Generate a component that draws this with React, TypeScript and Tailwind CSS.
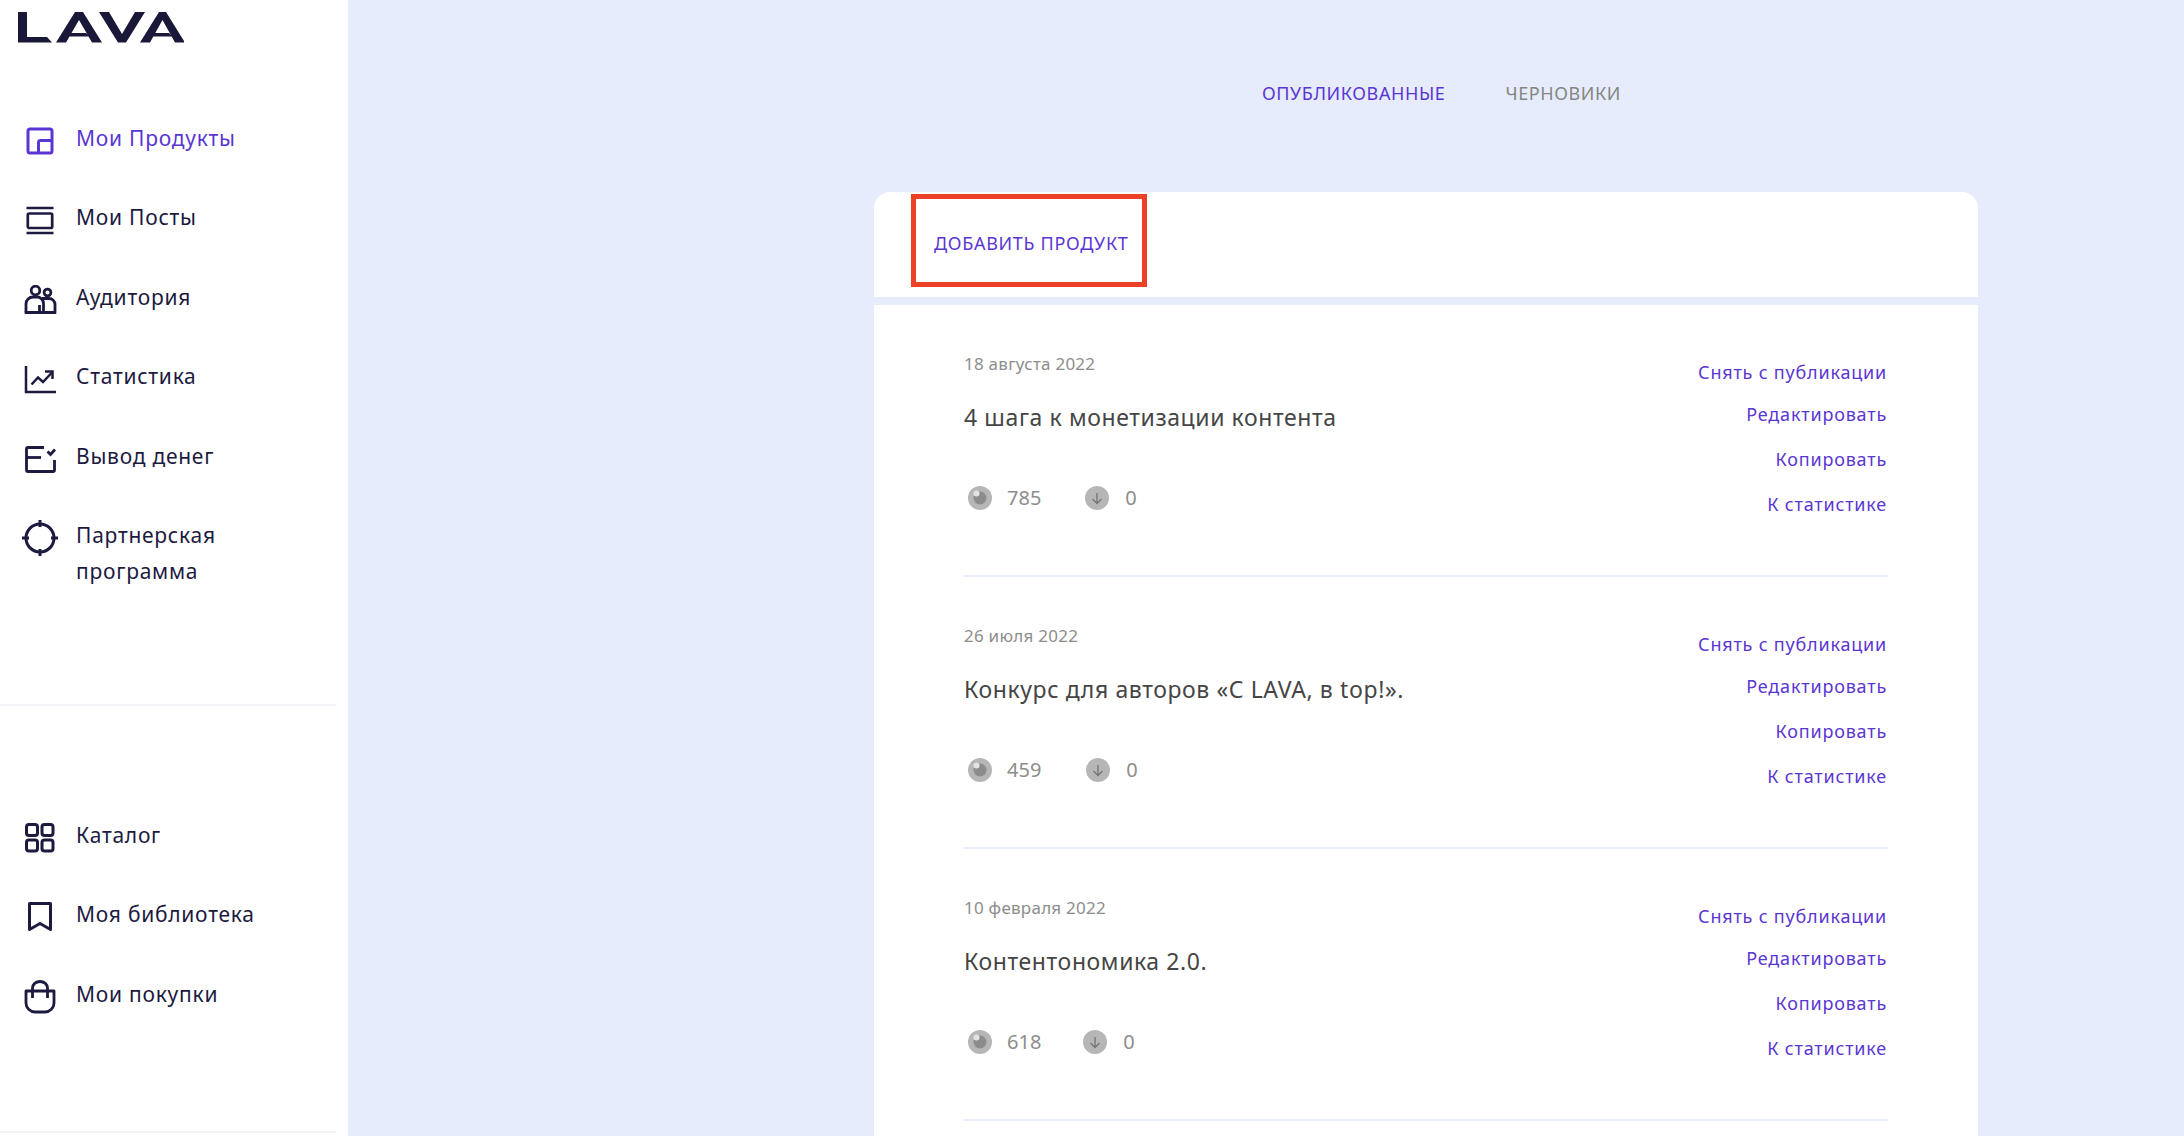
import React from "react";

function ProductIcon() {
  return (
    <svg width="30" height="30" viewBox="0 0 30 30" fill="none" stroke="currentColor" strokeWidth="3">
      <rect x="3" y="3" width="24" height="24" rx="2" />
      <path d="M13.500 27V16.500a2 2 0 0 1 2-2H27" />
    </svg>
  );
}
function PostsIcon() {
  return (
    <svg width="30" height="30" viewBox="0 0 30 30" fill="none" stroke="currentColor" strokeWidth="2.700">
      <path d="M1.500 3h27M1.500 28h27" />
      <rect x="2.800" y="8.500" width="24.400" height="14.500" rx="1.500" />
    </svg>
  );
}
function AudienceIcon() {
  return (
    <svg width="34" height="30" viewBox="0 0 34 30" fill="none" stroke="currentColor" strokeWidth="2.800">
      <circle cx="12.500" cy="5.500" r="4.300" />
      <circle cx="24.500" cy="7.500" r="3.400" />
      <path d="M3 27.500V19a7 7 0 0 1 7-7h4a6.500 6.500 0 0 1 6.500 6.500v9" />
      <path d="M16.500 27.500V20M19 13.500h7a6 6 0 0 1 6 6v8M1.700 27.500h31.600" />
    </svg>
  );
}
function StatsIcon() {
  return (
    <svg width="32" height="30" viewBox="0 0 32 30" fill="none" stroke="currentColor" strokeWidth="2.500">
      <path d="M2 2v26h30" />
      <path d="M7.500 20.500l6.500-7 5 4.500 8.500-9" />
      <path d="M21 7.500h7.500V15" />
    </svg>
  );
}
function WithdrawIcon() {
  return (
    <svg width="32" height="30" viewBox="0 0 32 30" fill="none" stroke="currentColor" strokeWidth="2.800">
      <path d="M20 3.500H4a1.500 1.500 0 0 0-1.500 1.500v21A1.500 1.500 0 0 0 4 27.500h25a1.500 1.500 0 0 0 1.500-1.500V16" />
      <path d="M3 13.500h14" />
      <path d="M23.500 7.500l3 3 4.500-5" />
    </svg>
  );
}
function PartnerIcon() {
  return (
    <svg width="38" height="38" viewBox="0 0 38 38" fill="none" stroke="currentColor" strokeWidth="3">
      <circle cx="19" cy="19" r="14" />
      <path d="M19 1v7M19 30v7M1 19h7M30 19h7" />
    </svg>
  );
}
function CatalogIcon() {
  return (
    <svg width="30" height="30" viewBox="0 0 30 30" fill="none" stroke="currentColor" strokeWidth="3">
      <rect x="1.500" y="1.500" width="11" height="11" rx="2.500" />
      <rect x="17" y="1.500" width="11" height="11" rx="2.500" />
      <rect x="1.500" y="17" width="11" height="11" rx="2.500" />
      <rect x="17" y="17" width="11" height="11" rx="2.500" />
    </svg>
  );
}
function BookmarkIcon() {
  return (
    <svg width="26" height="32" viewBox="0 0 26 32" fill="none" stroke="currentColor" strokeWidth="3">
      <path d="M2.500 2.500h21v26l-10.500-6-10.500 6z" strokeLinejoin="round" />
    </svg>
  );
}
function BagIcon() {
  return (
    <svg width="32" height="34" viewBox="0 0 32 34" fill="none" stroke="currentColor" strokeWidth="2.800">
      <path d="M2 11h28v12a9 9 0 0 1-9 9H11a9 9 0 0 1-9-9z" strokeLinejoin="round" />
      <path d="M8.500 18V8a7.500 6.500 0 0 1 15 0v10" />
    </svg>
  );
}

function Logo() {
  return (
    <svg width="166" height="31" viewBox="0 0 166 31" className="block" fill="#1a1838">
      <path d="M0 0h9v25h20l5 5.500H0z" />
      <path d="M38 30.500 57 0h8l19 30.500h-10L61 8 48 30.500zM52 21h16l3 3.500H50z" />
      <path d="M81 0h10l13 22L117 0h10l-19 30.500h-8z" />
      <path d="M122 30.500 141 0h7l19 30.500h-10L144.500 8 132 30.500zM135 21h16l3 3.500h-21z" />
    </svg>
  );
}

type NavItem = { label: React.ReactNode; icon: React.ReactNode; active?: boolean };

function SideLink({ label, icon, active }: NavItem) {
  return (
    <a className={`flex items-start ${active ? "text-[#5a36d3]" : "text-[#1c1a3f]"}`}>
      <span className="flex h-9 w-[39px] shrink-0 translate-y-[3px] items-center justify-center">{icon}</span>
      <span className="ml-[17px] text-[21px] leading-[36px] tracking-[0.75px]">{label}</span>
    </a>
  );
}

function EyeBadge() {
  return (
    <svg width="24" height="24" viewBox="0 0 24 24">
      <circle cx="12" cy="12" r="12" fill="#b6b6b6" />
      <circle cx="12" cy="12" r="6.500" fill="#8c8c8c" />
      <circle cx="8.500" cy="7.500" r="3" fill="#e4e4e4" />
    </svg>
  );
}

function DownBadge() {
  return (
    <svg width="24" height="24" viewBox="0 0 24 24" fill="none">
      <circle cx="12" cy="12" r="12" fill="#b6b6b6" />
      <path d="M12 7v10M7.500 13l4.500 4.500 4.500-4.500" stroke="#757575" strokeWidth="1.300" />
    </svg>
  );
}

type Post = { date: string; title: string; views: string; gap: string };

function PostRow({ date, title, views, gap }: Post) {
  return (
    <div className="flex h-[272px] justify-between border-b-2 border-[#e6ecfc] pt-[44px]">
      <div>
        <div className="text-[17px] leading-[30px] tracking-[0.25px] text-[#8d8d8d]">{date}</div>
        <div className="mt-[23px] text-[23px] leading-[30px] tracking-[0.6px] text-[#454545]">{title}</div>
        <div className="mt-[51px] flex items-center text-[20px] leading-[30px] text-[#8d8d8d]">
          <span className="ml-[4px]"><EyeBadge /></span>
          <span className="ml-[15px]">{views}</span>
          <span className={gap}><DownBadge /></span>
          <span className="ml-[16px]">0</span>
        </div>
      </div>
      <div className="flex flex-col items-end pt-[8px] pr-[1px] text-[18px] leading-[30px] tracking-[0.8px] text-[#5a36d3]">
        <a>Снять с публикации</a>
        <a className="mt-[12px]">Редактировать</a>
        <a className="mt-[15px]">Копировать</a>
        <a className="mt-[15px]">К статистике</a>
      </div>
    </div>
  );
}

const posts: Post[] = [
  { date: "18 августа 2022", title: "4 шага к монетизации контента", views: "785", gap: "ml-[44px]" },
  { date: "26 июля 2022", title: "Конкурс для авторов «С LAVA, в top!».", views: "459", gap: "ml-[45px]" },
  { date: "10 февраля 2022", title: "Контентономика 2.0.", views: "618", gap: "ml-[42px]" },
];

export default function App() {
  return (
    <div className="flex h-[1136px] overflow-hidden bg-[#e6ecfc] [font-family:'Noto_Sans',sans-serif]">
      <aside className="flex h-full w-[348px] shrink-0 flex-col bg-white">
        <div className="h-[120px] shrink-0 pl-[18px] pt-[12px]">
          <Logo />
        </div>
        <nav className="flex flex-col gap-[43.4px] pl-[20px]">
          <SideLink active label="Мои Продукты" icon={<ProductIcon />} />
          <SideLink label="Мои Посты" icon={<PostsIcon />} />
          <SideLink label="Аудитория" icon={<AudienceIcon />} />
          <SideLink label="Статистика" icon={<StatsIcon />} />
          <SideLink label="Вывод денег" icon={<WithdrawIcon />} />
          <SideLink label={<>Партнерская<br />программа</>} icon={<PartnerIcon />} />
        </nav>
        <div className="mt-[115px] mr-[12px] border-t-2 border-[#f2f3f7]" />
        <nav className="mt-[111px] flex flex-col gap-[43.500px] pl-[20px]">
          <SideLink label="Каталог" icon={<CatalogIcon />} />
          <SideLink label="Моя библиотека" icon={<BookmarkIcon />} />
          <SideLink label="Мои покупки" icon={<BagIcon />} />
        </nav>
        <div className="mt-[119px] mr-[12px] border-t-2 border-[#f2f3f7]" />
      </aside>
      <main className="flex-1">
        <div className="ml-[526px] w-[1104px]">
          <div className="flex h-[192px] items-start gap-[60px] pl-[388px] pt-[78px] text-[18px] leading-[30px] tracking-[0.6px]">
            <span className="text-[#5a36d3]">ОПУБЛИКОВАННЫЕ</span>
            <span className="text-[#858585]">ЧЕРНОВИКИ</span>
          </div>
          <div className="relative flex h-[105px] items-center rounded-t-[16px] bg-white pl-[60px] text-[18px] tracking-[0.7px] text-[#5a36d3]">
            <span className="mt-[-2px]">ДОБАВИТЬ ПРОДУКТ</span>
            <div className="absolute left-[37px] top-[2px] h-[93px] w-[236px] border-[5px] border-[#ec4126]" />
          </div>
          <div className="mt-[8px] h-[831px] bg-white px-[90px]">
            {posts.map((p) => (
              <PostRow key={p.date} {...p} />
            ))}
          </div>
        </div>
      </main>
    </div>
  );
}
